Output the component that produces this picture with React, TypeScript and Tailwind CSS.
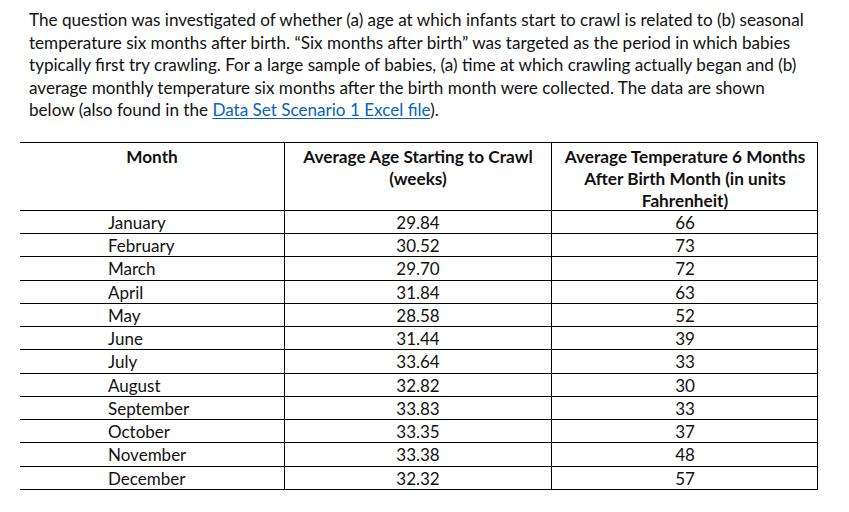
import React from 'react'

const rows: [string, string, string][] = [
  ['January', '29.84', '66'],
  ['February', '30.52', '73'],
  ['March', '29.70', '72'],
  ['April', '31.84', '63'],
  ['May', '28.58', '52'],
  ['June', '31.44', '39'],
  ['July', '33.64', '33'],
  ['August', '32.82', '30'],
  ['September', '33.83', '33'],
  ['October', '33.35', '37'],
  ['November', '33.38', '48'],
  ['December', '32.32', '57'],
]

export default function App() {
  return (
    <div className="w-[849px] h-[512px] bg-white text-[#111] font-['Lato','Liberation_Sans',sans-serif] overflow-hidden">
      {/* intro paragraph */}
      <p className="pl-[29px] pt-[9px] text-[17.1px] leading-[22.6px] whitespace-nowrap">
        The question was investigated of whether (a) age at which infants start to crawl is related to (b) seasonal
        <br />
        temperature six months after birth. “Six months after birth” was targeted as the period in which babies
        <br />
        typically first try crawling. For a large sample of babies, (a) time at which crawling actually began and (b)
        <br />
        average monthly temperature six months after the birth month were collected. The data are shown
        <br />
        below (also found in the{' '}
        <a href="#" className="text-[#0563c1] underline underline-offset-2">
          Data Set Scenario 1 Excel file
        </a>
        ).
      </p>

      {/* data table */}
      <div className="ml-[20px] mt-[20px] w-[798px] grid grid-cols-[265px_267px_266px] border-t border-r border-black">
        <div className="h-[68px] border-b border-r border-black pt-[3px] text-center font-bold text-[17.2px] leading-[22px]">
          Month
        </div>
        <div className="h-[68px] border-b border-r border-black pt-[3px] text-center font-bold text-[17.2px] leading-[22px]">
          Average Age Starting to Crawl
          <br />
          (weeks)
        </div>
        <div className="h-[68px] border-b border-black pt-[3px] text-center font-bold text-[17.2px] leading-[22px]">
          Average Temperature 6 Months
          <br />
          After Birth Month (in units
          <br />
          Fahrenheit)
        </div>

        {rows.map(([m, age, temp]) => (
          <React.Fragment key={m}>
            <div className="h-[23.25px] border-b border-r border-black pt-px pl-[88px] text-[17px] leading-[22px]">{m}</div>
            <div className="h-[23.25px] border-b border-r border-black pt-px text-center text-[17px] leading-[22px]">{age}</div>
            <div className="h-[23.25px] border-b border-black pt-px text-center text-[17px] leading-[22px]">{temp}</div>
          </React.Fragment>
        ))}
      </div>
    </div>
  )
}
